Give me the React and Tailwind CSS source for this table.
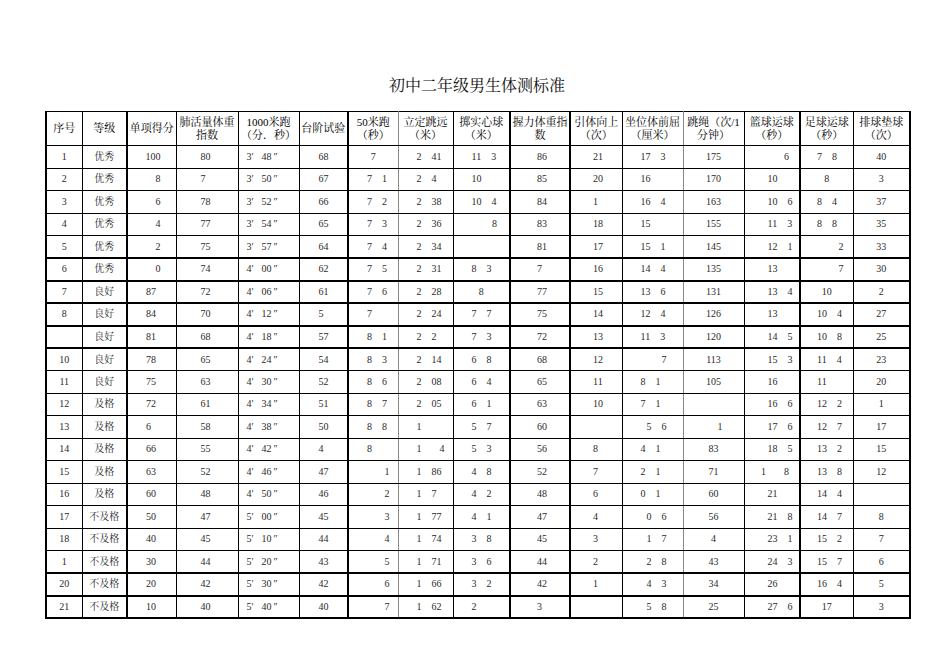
import React from 'react';

// column widths + how each column places its figures (as in the sheet)
const cols = [
  { w: 'w-[36px]', align: 'c', pl: '', pr: '', edge: 'border-r-black' },
  { w: 'w-[45px]', align: 'c', pl: '', pr: '', edge: 'border-r-2 border-r-black' },
  { w: 'w-[49px]', align: 'l', pl: 'pl-[18px]', pr: 'pr-[15px]', edge: 'border-r-black' },
  { w: 'w-[62px]', align: 'l', pl: 'pl-[24px]', pr: '', edge: 'border-r-black' },
  { w: 'w-[61px]', align: 'l', pl: 'pl-[8px]', pr: '', edge: 'border-r-black', time: true },
  { w: 'w-[49px]', align: 'l', pl: 'pl-[19px]', pr: '', edge: 'border-r-2 border-r-black' },
  { w: 'w-[50px]', align: 'l', pl: 'pl-[18px]', pr: 'pr-[8px]', edge: 'border-r-[#888]' },
  { w: 'w-[55px]', align: 'l', pl: 'pl-[18px]', pr: '', edge: 'border-r-black' },
  { w: 'w-[57px]', align: 'l', pl: 'pl-[18px]', pr: 'pr-[12px]', edge: 'border-r-2 border-r-black' },
  { w: 'w-[60px]', align: 'l', pl: 'pl-[26px]', pr: '', edge: 'border-r-2 border-r-black' },
  { w: 'w-[52px]', align: 'l', pl: 'pl-[22px]', pr: '', edge: 'border-r-black' },
  { w: 'w-[61px]', align: 'l', pl: 'pl-[18px]', pr: 'pr-[16px]', edge: 'border-r-[#888]' },
  { w: 'w-[61px]', align: 'c', pl: '', pr: 'pr-[21px]', edge: 'border-r-black' },
  { w: 'w-[56px]', align: 'l', pl: 'pl-[23px]', pr: 'pr-[10px]', edge: 'border-r-2 border-r-black' },
  { w: 'w-[53px]', align: 'l', pl: 'pl-[16px]', pr: 'pr-[9px]', edge: 'border-r-black' },
  { w: 'w-[57px]', align: 'c', pl: '', pr: '', edge: 'border-r-2 border-r-black' },
];

const headers = [
  ['序号'],
  ['等级'],
  ['单项得分'],
  ['肺活量体重', '指数'],
  ['1000米跑', '（分．秒）'],
  ['台阶试验'],
  ['50米跑', '（秒）'],
  ['立定跳远', '（米）'],
  ['掷实心球', '（米）'],
  ['握力体重指', '数'],
  ['引体向上', '（次）'],
  ['坐位体前屈', '（厘米）'],
  ['跳绳（次/1', '分钟）'],
  ['篮球运球', '（秒）'],
  ['足球运球', '（秒）'],
  ['排球垫球', '（次）'],
];

// ">" = right aligned, "^" = centred, a space = the hidden decimal point
const rows = [
  ['1', '优秀', '>100', '80', '3′48″', '68', '^7', '2 41', '11 3', '86', '21', '17 3', '175', '>6', '7 8', '40'],
  ['2', '优秀', '>8', '7', '3′50″', '67', '7 1', '2 4', '10', '85', '20', '16', '170', '10', '^8', '3'],
  ['3', '优秀', '>6', '78', '3′52″', '66', '7 2', '2 38', '10 4', '84', '1', '16 4', '163', '10 6', '8 4', '37'],
  ['4', '优秀', '>4', '77', '3′54″', '65', '7 3', '2 36', '>8', '83', '18', '15', '155', '11 3', '8 8', '35'],
  ['5', '优秀', '>2', '75', '3′57″', '64', '7 4', '2 34', '', '81', '17', '15 1', '145', '12 1', '>2', '33'],
  ['6', '优秀', '>0', '74', '4′00″', '62', '7 5', '2 31', '8 3', '7', '16', '14 4', '135', '13', '>7', '30'],
  ['7', '良好', '87', '72', '4′06″', '61', '7 6', '2 28', '^8', '77', '15', '13 6', '131', '13 4', '^10', '2'],
  ['8', '良好', '84', '70', '4′12″', '5', '7', '2 24', '7 7', '75', '14', '12 4', '126', '13', '10 4', '27'],
  ['', '良好', '81', '68', '4′18″', '57', '8 1', '2 2', '7 3', '72', '13', '11 3', '120', '14 5', '10 8', '25'],
  ['10', '良好', '78', '65', '4′24″', '54', '8 3', '2 14', '6 8', '68', '12', '>7', '113', '15 3', '11 4', '23'],
  ['11', '良好', '75', '63', '4′30″', '52', '8 6', '2 08', '6 4', '65', '11', '8 1', '105', '16', '11', '20'],
  ['12', '及格', '72', '61', '4′34″', '51', '8 7', '2 05', '6 1', '63', '10', '7 1', '', '16 6', '12 2', '1'],
  ['13', '及格', '6', '58', '4′38″', '50', '8 8', '1', '5 7', '60', '', '>5 6', '>1', '17 6', '12 7', '17'],
  ['14', '及格', '66', '55', '4′42″', '4', '8', '1   4', '5 3', '56', '8', '4 1', '83', '18 5', '13 2', '15'],
  ['15', '及格', '63', '52', '4′46″', '47', '>1', '1 86', '4 8', '52', '7', '2 1', '71', '>1   8', '13 8', '12'],
  ['16', '及格', '60', '48', '4′50″', '46', '>2', '1 7', '4 2', '48', '6', '0 1', '60', '21', '14 4', ''],
  ['17', '不及格', '50', '47', '5′00″', '45', '>3', '1 77', '4 1', '47', '4', '>0 6', '56', '21 8', '14 7', '8'],
  ['18', '不及格', '40', '45', '5′10″', '44', '>4', '1 74', '3 8', '45', '3', '>1 7', '4', '23 1', '15 2', '7'],
  ['1', '不及格', '30', '44', '5′20″', '43', '>5', '1 71', '3 6', '44', '2', '>2 8', '43', '24 3', '15 7', '6'],
  ['20', '不及格', '20', '42', '5′30″', '42', '>6', '1 66', '3 2', '42', '1', '>4 3', '34', '26', '16 4', '5'],
  ['21', '不及格', '10', '40', '5′40″', '40', '>7', '1 62', '2', '3', '', '>5 8', '25', '27 6', '^17', '3'],
];

// rows whose lower rule is drawn heavier
const heavy = [4, 5, 6, 7, 8, 18, 19, 20];

const serif = 'font-["Liberation_Serif","Noto_Serif_CJK_SC","Noto_Sans_CJK_SC",serif]';

const Figure = ({ text, time }) => {
  if (time) {
    const [m, s] = text.replace('″', '').split('′');
    return (
      <span className="whitespace-nowrap">
        {m}
        <span className="inline-block w-[10px] text-left">′</span>
        {s}
        <span className="inline-block w-[10px] pl-[2px] text-left">″</span>
      </span>
    );
  }
  const parts = text.split(/( +)/);
  return (
    <span className="whitespace-nowrap">
      {parts.map((p, i) =>
        /^ +$/.test(p) ? (
          <span key={i} className={p.length > 1 ? 'inline-block w-[18px]' : 'inline-block w-[10px]'} />
        ) : (
          <React.Fragment key={i}>{p}</React.Fragment>
        )
      )}
    </span>
  );
};

const Cell = ({ raw, col, rowIdx }) => {
  let text = raw;
  let align = col.align;
  if (text.startsWith('>')) {
    align = 'r';
    text = text.slice(1);
  } else if (text.startsWith('^')) {
    align = 'c';
    text = text.slice(1);
  }
  const alignCls =
    align === 'c' ? 'text-center' : align === 'r' ? `text-right ${col.pr}` : `text-left ${col.pl}`;
  const bottom = heavy.includes(rowIdx) ? 'border-b-2 border-b-black' : 'border-b border-b-black';
  return (
    <td className={`h-[22.5px] p-0 align-middle border-r ${col.edge} ${bottom} ${alignCls}`}>
      {text && <Figure text={text} time={col.time} />}
    </td>
  );
};

export default function App() {
  return (
    <div className={`w-[950px] h-[672px] bg-white text-[#2a2a2a] ${serif}`}>
      <div className="pt-[76px] pl-[45px]">
        <h1 className="w-[864px] text-center text-[16px] leading-[20px] font-normal text-[#111]">
          初中二年级男生体测标准
        </h1>
        <table className="mt-[15px] w-[864px] table-fixed border-collapse border-l-2 border-t border-l-black border-t-black text-[10px] leading-[12px]">
          <colgroup>
            {cols.map((c, i) => (
              <col key={i} className={c.w} />
            ))}
          </colgroup>
          <thead>
            <tr>
              {headers.map((h, i) => (
                <th
                  key={i}
                  className={`h-[34px] p-0 align-middle text-center font-normal text-[11px] leading-[13px] text-black whitespace-nowrap border-r border-b border-b-black ${cols[i].edge}`}
                >
                  {h.map((line, j) => (
                    <div key={j}>{line}</div>
                  ))}
                </th>
              ))}
            </tr>
          </thead>
          <tbody>
            {rows.map((r, ri) => (
              <tr key={ri}>
                {r.map((v, ci) => (
                  <Cell key={ci} raw={v} col={cols[ci]} rowIdx={ri} />
                ))}
              </tr>
            ))}
          </tbody>
        </table>
      </div>
    </div>
  );
}
